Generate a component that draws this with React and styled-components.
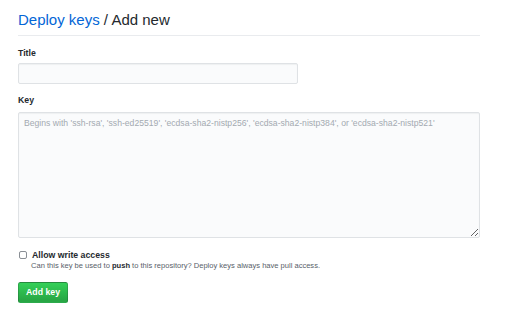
import React from "react";
import styled, { createGlobalStyle } from "styled-components";

const GlobalStyle = createGlobalStyle`
  html, body {
    margin: 0;
    padding: 0;
    background: #fff;
  }
  body {
    font-family: "Liberation Sans", Arial, sans-serif;
    color: #24292e;
  }
`;

const Page = styled.div`
  width: 462px;
  padding: 10px 0 0 18px;
`;

const Subhead = styled.div`
  padding-bottom: 5px;
  margin-bottom: 11px;
  border-bottom: 1px solid #e9ebee;
`;

const Heading = styled.h2`
  margin: 0;
  font-size: 15px;
  line-height: 20px;
  font-weight: 400;
  color: #24292e;

  a {
    color: #0366d6;
    text-decoration: none;
  }
`;

const FormGroup = styled.div`
  margin-bottom: ${(p) => p.$gap || 10}px;
`;

const Label = styled.label`
  display: block;
  font-size: 8.75px;
  line-height: 12px;
  font-weight: 700;
  margin-bottom: ${(p) => p.$gap || 4}px;
`;

const Input = styled.input`
  box-sizing: border-box;
  display: block;
  width: ${(p) => p.$width || 280}px;
  height: 21px;
  margin: 0;
  padding: 3px 5px;
  border: 1px solid #dfe2e5;
  border-radius: 2px;
  background: #fafbfc;
  box-shadow: inset 0 1px 1px rgba(27, 31, 35, 0.05);
  font-family: inherit;
  font-size: 8.75px;
  outline: none;
`;

const TextArea = styled.textarea`
  box-sizing: border-box;
  display: block;
  width: 100%;
  height: 126px;
  margin: 0;
  padding: 5px;
  border: 1px solid #dfe2e5;
  border-radius: 2px;
  background: #fafbfc;
  box-shadow: inset 0 1px 1px rgba(27, 31, 35, 0.05);
  font-family: inherit;
  font-size: 8.65px;
  line-height: 11px;
  color: #24292e;
  outline: none;
  resize: vertical;

  &::placeholder {
    color: #a3aab1;
  }
`;

const CheckRow = styled.div`
  display: flex;
  align-items: center;
  gap: 5px;
  margin-left: 1px;
`;

const Checkbox = styled.input`
  appearance: none;
  box-sizing: border-box;
  width: 8px;
  height: 8px;
  margin: 0;
  border: 1px solid #8a8f95;
  border-radius: 2px;
  background: #fff;
`;

const CheckLabel = styled.label`
  font-size: 8.75px;
  line-height: 12px;
  font-weight: 700;
  color: #24292e;
`;

const Note = styled.p`
  margin: 0 0 0 13px;
  font-size: 7.55px;
  line-height: 10px;
  color: #586069;

  strong {
    color: #24292e;
    font-weight: 700;
  }
`;

const Button = styled.button`
  box-sizing: border-box;
  height: 21px;
  padding: 0 7px;
  margin-top: 11px;
  border: 1px solid rgba(27, 31, 35, 0.2);
  border-radius: 2.5px;
  background: linear-gradient(-180deg, #34d058 0%, #28a745 90%);
  color: #fff;
  font-family: inherit;
  font-size: 8.75px;
  font-weight: 700;
  line-height: 19px;
  cursor: pointer;
`;

export default function App() {
  return (
    <>
      <GlobalStyle />
      <Page>
        <Subhead>
          <Heading>
            <a href="#keys">Deploy keys</a> / Add new
          </Heading>
        </Subhead>
        <FormGroup>
          <Label htmlFor="title">Title</Label>
          <Input id="title" type="text" />
        </FormGroup>
        <FormGroup $gap={11}>
          <Label htmlFor="key" $gap={6}>Key</Label>
          <TextArea
            id="key"
            placeholder="Begins with 'ssh-rsa', 'ssh-ed25519', 'ecdsa-sha2-nistp256', 'ecdsa-sha2-nistp384', or 'ecdsa-sha2-nistp521'"
          />
        </FormGroup>
        <CheckRow>
          <Checkbox id="write" type="checkbox" />
          <CheckLabel htmlFor="write">Allow write access</CheckLabel>
        </CheckRow>
        <Note>
          Can this key be used to <strong>push</strong> to this repository?
          Deploy keys always have pull access.
        </Note>
        <Button type="button">Add key</Button>
      </Page>
    </>
  );
}
